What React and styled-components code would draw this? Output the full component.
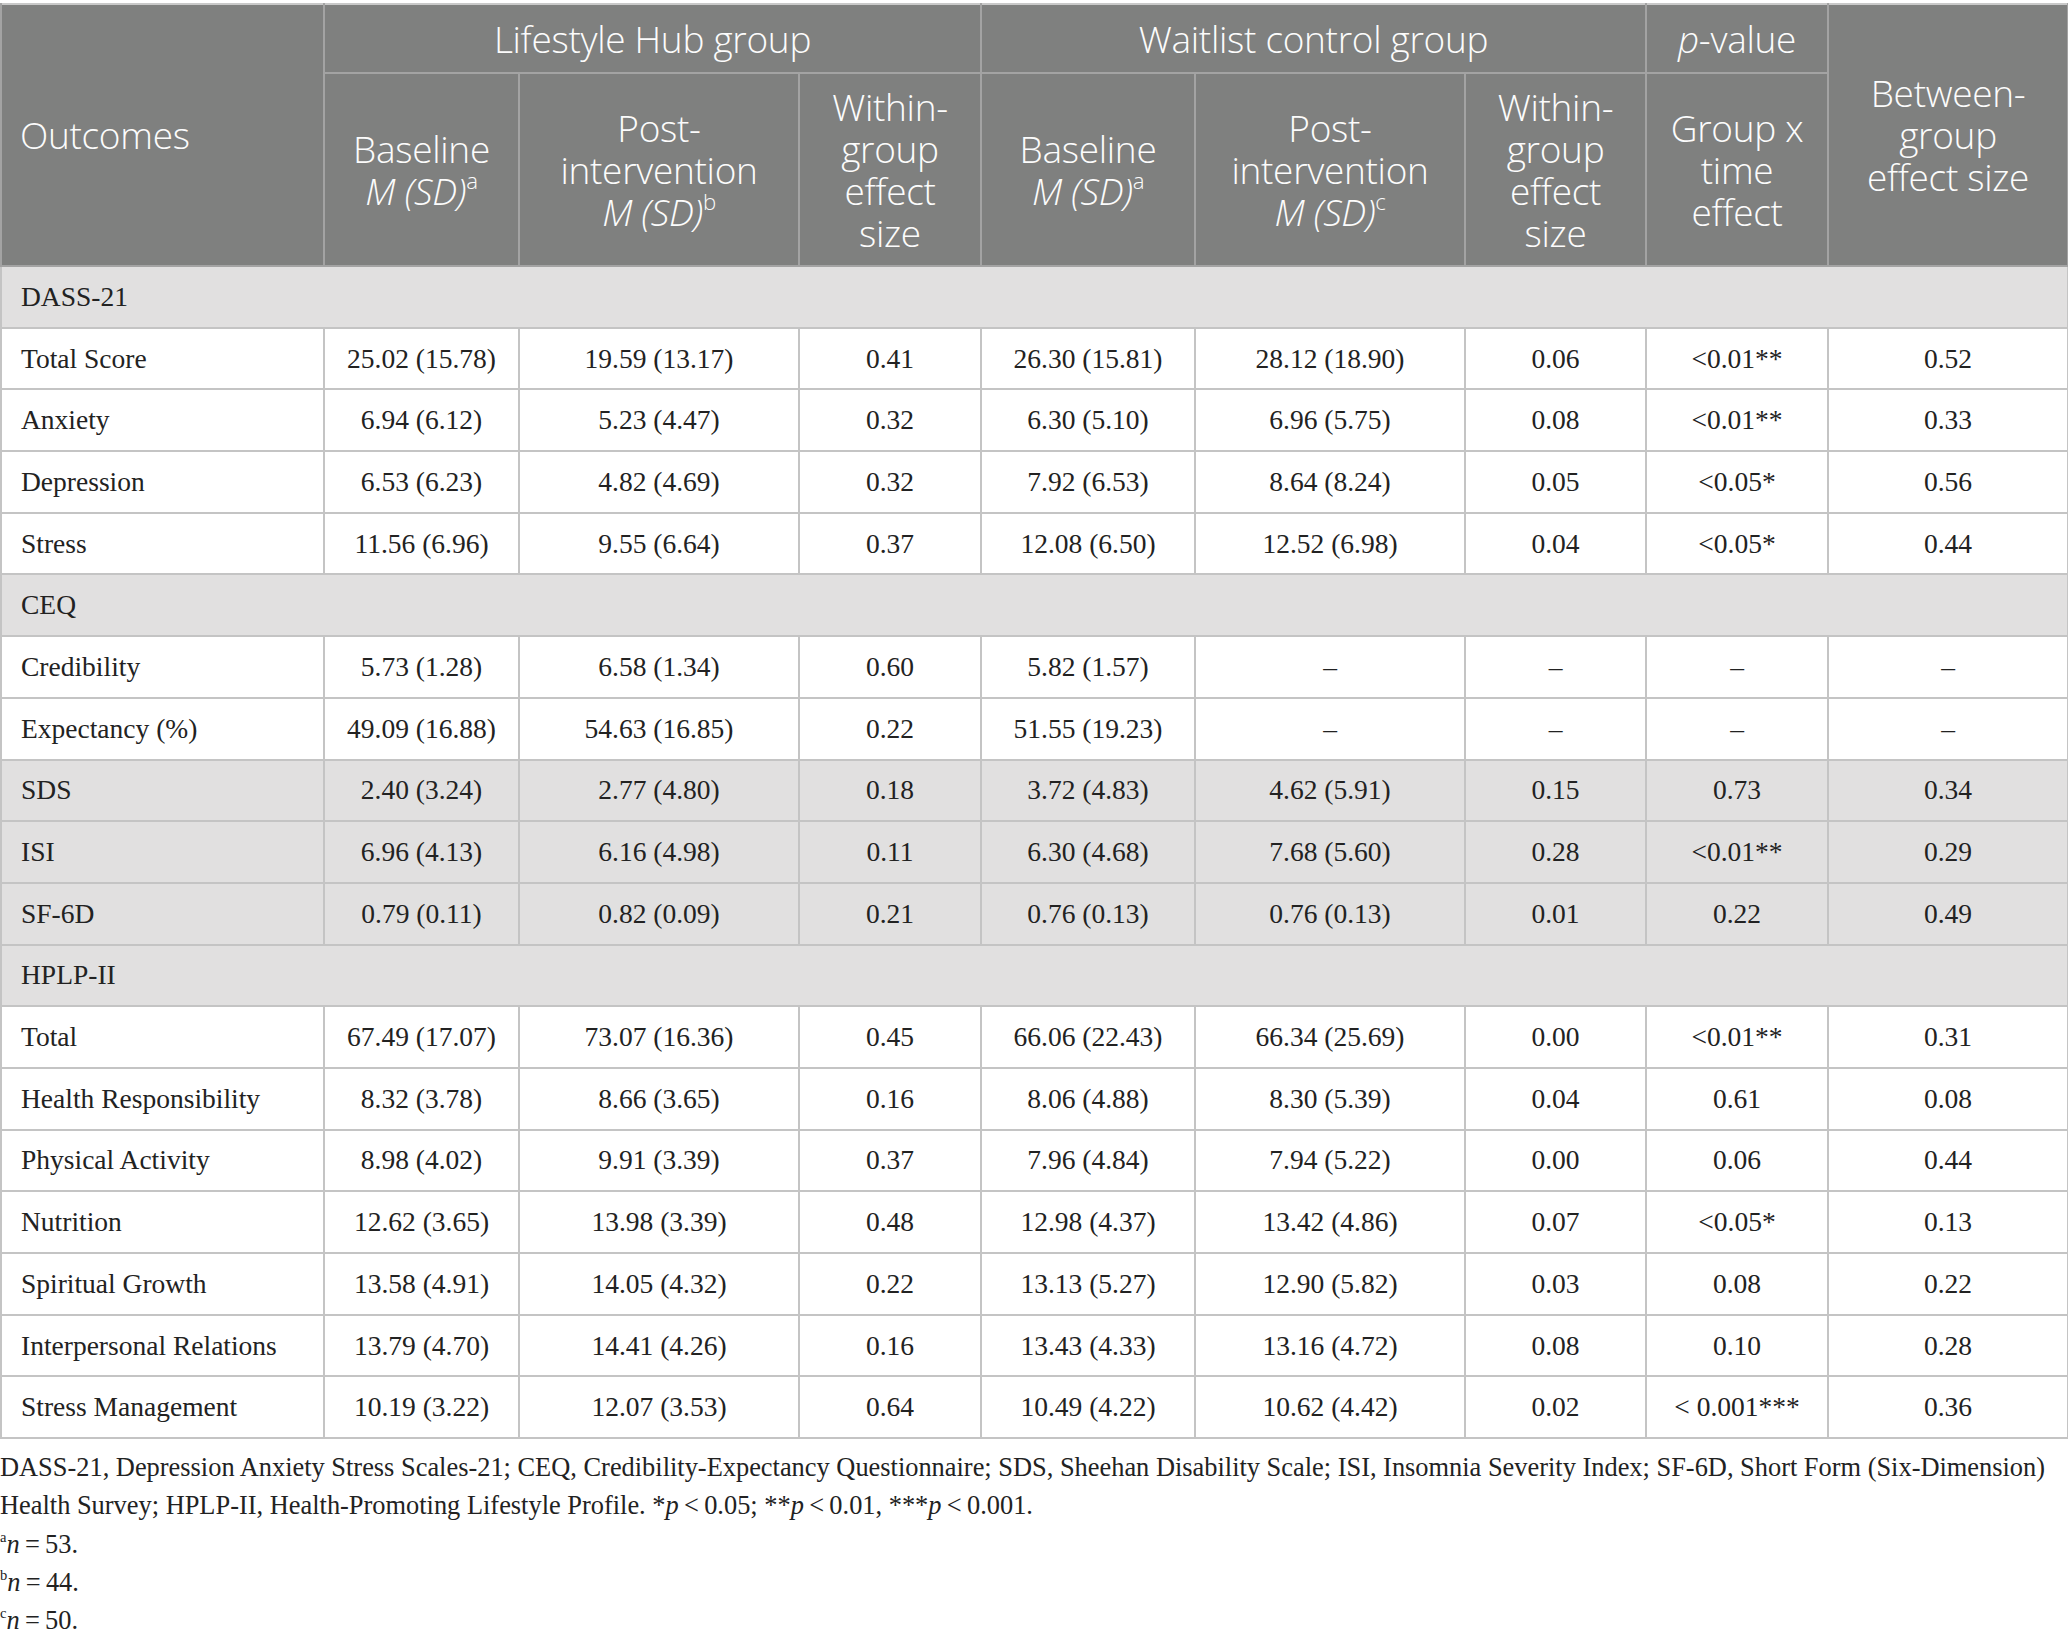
import React from 'react';
import styled, { createGlobalStyle } from 'styled-components';

const GlobalStyle = createGlobalStyle`
  html, body {
    margin: 0;
    padding: 0;
    background: #fff;
  }
`;

const Page = styled.div`
  width: 2068px;
  padding-top: 3px;
`;

const Table = styled.table`
  width: 2067px;
  border-collapse: collapse;
  table-layout: fixed;
  border-top: 2px solid #c9c9c9;
`;

const HeadCell = styled.th`
  background: #7f807f;
  color: #fcfcfc;
  font-family: "Open Sans", "Noto Sans", sans-serif;
  font-weight: 350;
  font-size: 37px;
  letter-spacing: -0.3px;
  line-height: 42px;
  text-align: ${(p) => (p.$left ? 'left' : 'center')};
  padding: ${(p) => (p.$left ? '0 0 0 18px' : '0 4px')};
  border: 2px solid #a3a3a3;
  border-top: none;
  height: ${(p) => p.$h || 'auto'};
  vertical-align: middle;
  white-space: nowrap;
`;

const Italic = styled.i`
  font-style: italic;
`;

const Sup = styled.sup`
  font-size: 0.6em;
  line-height: 0;
  vertical-align: 0.7em;
  font-style: normal;
`;

const Row = styled.tr`
  background: ${(p) => (p.$shade ? '#e1e0e0' : '#fff')};
`;

const Cell = styled.td`
  font-family: "Liberation Serif", "Times New Roman", serif;
  font-size: 27.5px;
  color: #222;
  height: 59.7px;
  padding: 0;
  text-align: ${(p) => (p.$left ? 'left' : 'center')};
  padding-left: ${(p) => (p.$left ? '19px' : '0')};
  border: 2px solid #c4c4c4;
  vertical-align: middle;
  white-space: nowrap;
`;

const Notes = styled.div`
  font-family: "Liberation Serif", "Times New Roman", serif;
  font-size: 26.4px;
  color: #222;
  line-height: 38.3px;
  padding-top: 9px;
`;

const NoteLine = styled.div`
  white-space: nowrap;
`;

const NoteSup = styled.sup`
  font-size: 0.55em;
  line-height: 0;
  vertical-align: 0.75em;
`;

const colWidths = [323, 195, 280, 182, 214, 270, 181, 182, 240];

const rows = [
  { section: 'DASS-21' },
  ['Total Score', '25.02 (15.78)', '19.59 (13.17)', '0.41', '26.30 (15.81)', '28.12 (18.90)', '0.06', '<0.01**', '0.52'],
  ['Anxiety', '6.94 (6.12)', '5.23 (4.47)', '0.32', '6.30 (5.10)', '6.96 (5.75)', '0.08', '<0.01**', '0.33'],
  ['Depression', '6.53 (6.23)', '4.82 (4.69)', '0.32', '7.92 (6.53)', '8.64 (8.24)', '0.05', '<0.05*', '0.56'],
  ['Stress', '11.56 (6.96)', '9.55 (6.64)', '0.37', '12.08 (6.50)', '12.52 (6.98)', '0.04', '<0.05*', '0.44'],
  { section: 'CEQ' },
  ['Credibility', '5.73 (1.28)', '6.58 (1.34)', '0.60', '5.82 (1.57)', '–', '–', '–', '–'],
  ['Expectancy (%)', '49.09 (16.88)', '54.63 (16.85)', '0.22', '51.55 (19.23)', '–', '–', '–', '–'],
  { shade: true, cells: ['SDS', '2.40 (3.24)', '2.77 (4.80)', '0.18', '3.72 (4.83)', '4.62 (5.91)', '0.15', '0.73', '0.34'] },
  { shade: true, cells: ['ISI', '6.96 (4.13)', '6.16 (4.98)', '0.11', '6.30 (4.68)', '7.68 (5.60)', '0.28', '<0.01**', '0.29'] },
  { shade: true, cells: ['SF-6D', '0.79 (0.11)', '0.82 (0.09)', '0.21', '0.76 (0.13)', '0.76 (0.13)', '0.01', '0.22', '0.49'] },
  { section: 'HPLP-II' },
  ['Total', '67.49 (17.07)', '73.07 (16.36)', '0.45', '66.06 (22.43)', '66.34 (25.69)', '0.00', '<0.01**', '0.31'],
  ['Health Responsibility', '8.32 (3.78)', '8.66 (3.65)', '0.16', '8.06 (4.88)', '8.30 (5.39)', '0.04', '0.61', '0.08'],
  ['Physical Activity', '8.98 (4.02)', '9.91 (3.39)', '0.37', '7.96 (4.84)', '7.94 (5.22)', '0.00', '0.06', '0.44'],
  ['Nutrition', '12.62 (3.65)', '13.98 (3.39)', '0.48', '12.98 (4.37)', '13.42 (4.86)', '0.07', '<0.05*', '0.13'],
  ['Spiritual Growth', '13.58 (4.91)', '14.05 (4.32)', '0.22', '13.13 (5.27)', '12.90 (5.82)', '0.03', '0.08', '0.22'],
  ['Interpersonal Relations', '13.79 (4.70)', '14.41 (4.26)', '0.16', '13.43 (4.33)', '13.16 (4.72)', '0.08', '0.10', '0.28'],
  ['Stress Management', '10.19 (3.22)', '12.07 (3.53)', '0.64', '10.49 (4.22)', '10.62 (4.42)', '0.02', '< 0.001***', '0.36'],
];

const MSD = ({ mark }) => (
  <>
    <Italic>M (SD)</Italic>
    <Sup>{mark}</Sup>
  </>
);

const DataRow = ({ cells, shade }) => (
  <Row $shade={shade}>
    {cells.map((c, i) => (
      <Cell key={i} $left={i === 0}>
        {c}
      </Cell>
    ))}
  </Row>
);

const App = () => {
  return (
    <Page>
      <GlobalStyle />
      <Table>
        <colgroup>
          {colWidths.map((w, i) => (
            <col key={i} style={{ width: w }} />
          ))}
        </colgroup>
        <thead>
          <tr>
            <HeadCell rowSpan={2} $left>Outcomes</HeadCell>
            <HeadCell colSpan={3} $h="67px">Lifestyle Hub group</HeadCell>
            <HeadCell colSpan={3}>Waitlist control group</HeadCell>
            <HeadCell>
              <Italic>p</Italic>-value
            </HeadCell>
            <HeadCell rowSpan={2}>
              Between-
              <br />
              group
              <br />
              effect size
            </HeadCell>
          </tr>
          <tr>
            <HeadCell $h="191px">
              Baseline
              <br />
              <MSD mark="a" />
            </HeadCell>
            <HeadCell>
              Post-
              <br />
              intervention
              <br />
              <MSD mark="b" />
            </HeadCell>
            <HeadCell>
              Within-
              <br />
              group
              <br />
              effect
              <br />
              size
            </HeadCell>
            <HeadCell>
              Baseline
              <br />
              <MSD mark="a" />
            </HeadCell>
            <HeadCell>
              Post-
              <br />
              intervention
              <br />
              <MSD mark="c" />
            </HeadCell>
            <HeadCell>
              Within-
              <br />
              group
              <br />
              effect
              <br />
              size
            </HeadCell>
            <HeadCell>
              Group x
              <br />
              time
              <br />
              effect
            </HeadCell>
          </tr>
        </thead>
        <tbody>
          {rows.map((r, i) => {
            if (r.section) {
              return (
                <Row key={i} $shade>
                  <Cell colSpan={9} $left>
                    {r.section}
                  </Cell>
                </Row>
              );
            }
            if (r.cells) return <DataRow key={i} cells={r.cells} shade={r.shade} />;
            return <DataRow key={i} cells={r} />;
          })}
        </tbody>
      </Table>
      <Notes>
        <NoteLine>
          DASS-21, Depression Anxiety Stress Scales-21; CEQ, Credibility-Expectancy Questionnaire; SDS, Sheehan
          Disability Scale; ISI, Insomnia Severity Index; SF-6D, Short Form (Six-Dimension)
        </NoteLine>
        <NoteLine>
          Health Survey; HPLP-II, Health-Promoting Lifestyle Profile. *<Italic>p</Italic>&thinsp;&lt;&thinsp;0.05;
          **<Italic>p</Italic>&thinsp;&lt;&thinsp;0.01, ***<Italic>p</Italic>&thinsp;&lt;&thinsp;0.001.
        </NoteLine>
        <NoteLine>
          <NoteSup>a</NoteSup>
          <Italic>n</Italic>&thinsp;=&thinsp;53.
        </NoteLine>
        <NoteLine>
          <NoteSup>b</NoteSup>
          <Italic>n</Italic>&thinsp;=&thinsp;44.
        </NoteLine>
        <NoteLine>
          <NoteSup>c</NoteSup>
          <Italic>n</Italic>&thinsp;=&thinsp;50.
        </NoteLine>
      </Notes>
    </Page>
  );
};

export default App;
